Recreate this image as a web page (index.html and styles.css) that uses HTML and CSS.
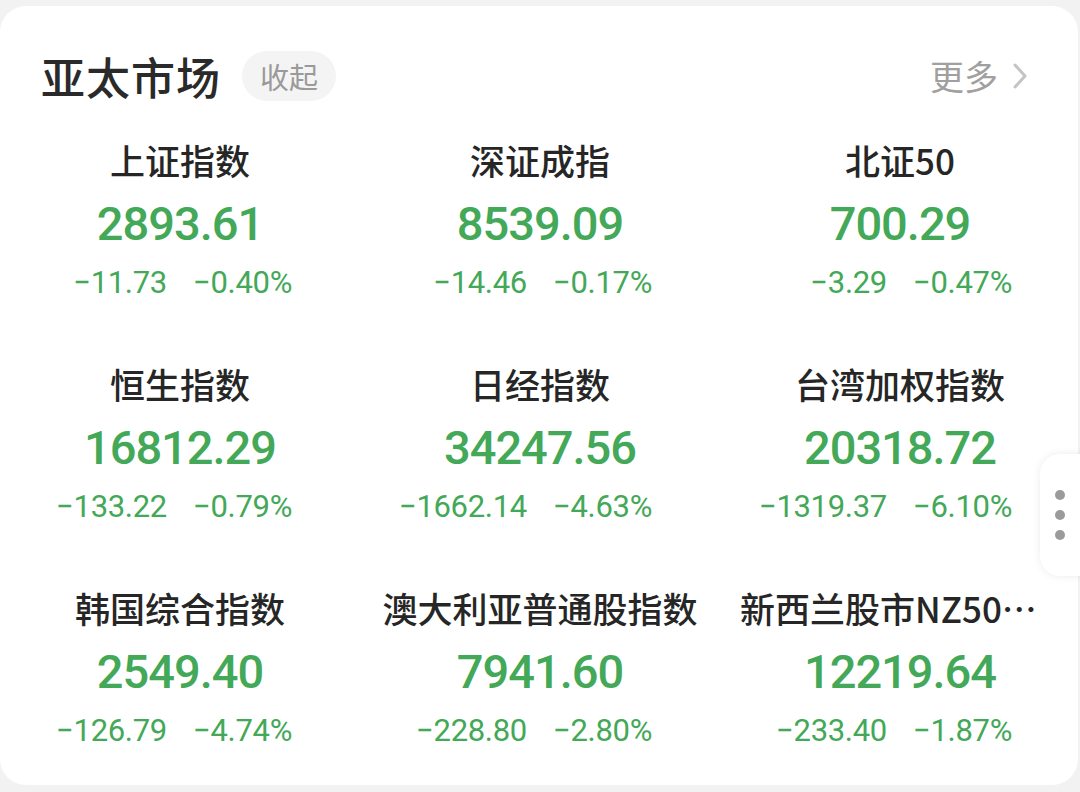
FILE: index.html
```html
<!DOCTYPE html>
<html lang="zh-CN">
<head>
<meta charset="utf-8">
<title>亚太市场</title>
<link rel="stylesheet" href="styles.css">
</head>
<body>
<div class="card">
  <div class="header">
    <div class="title-group">
      <h1 class="title">亚太市场</h1>
      <span class="pill">收起</span>
    </div>
    <div class="more">更多
      <svg class="chev" width="16" height="28" viewBox="0 0 16 28"><path d="M3 3 L13 14 L3 25" fill="none" stroke="#c4c4c4" stroke-width="3" stroke-linecap="round" stroke-linejoin="round"/></svg>
    </div>
  </div>
  <div class="grid">
    <div class="cell"><div class="name">上证指数</div><div class="value">2893.61</div><div class="change"><span class="abs">−11.73</span><span>−0.40%</span></div></div>
    <div class="cell"><div class="name">深证成指</div><div class="value">8539.09</div><div class="change"><span class="abs">−14.46</span><span>−0.17%</span></div></div>
    <div class="cell"><div class="name">北证50</div><div class="value">700.29</div><div class="change"><span class="abs">−3.29</span><span>−0.47%</span></div></div>
    <div class="cell"><div class="name">恒生指数</div><div class="value">16812.29</div><div class="change"><span class="abs">−133.22</span><span>−0.79%</span></div></div>
    <div class="cell"><div class="name">日经指数</div><div class="value">34247.56</div><div class="change"><span class="abs">−1662.14</span><span>−4.63%</span></div></div>
    <div class="cell"><div class="name">台湾加权指数</div><div class="value">20318.72</div><div class="change"><span class="abs">−1319.37</span><span>−6.10%</span></div></div>
    <div class="cell"><div class="name">韩国综合指数</div><div class="value">2549.40</div><div class="change"><span class="abs">−126.79</span><span>−4.74%</span></div></div>
    <div class="cell"><div class="name">澳大利亚普通股指数</div><div class="value">7941.60</div><div class="change"><span class="abs">−228.80</span><span>−2.80%</span></div></div>
    <div class="cell"><div class="name">新西兰股市NZ50指数</div><div class="value">12219.64</div><div class="change"><span class="abs">−233.40</span><span>−1.87%</span></div></div>
  </div>
</div>
<div class="handle"><i></i><i></i><i></i></div>
</body>
</html>
```
FILE: styles.css
```css
html, body {
  margin: 0;
  padding: 0;
}
body {
  background: #f2f2f2;
  width: 1080px;
  height: 792px;
  overflow: hidden;
  font-family: "Noto Sans CJK SC", "Noto Sans", sans-serif;
}
.card {
  margin-top: 6px;
  width: 1078px;
  height: 779px;
  background: #fff;
  border-radius: 26px;
  box-sizing: border-box;
  padding: 40px 0 0 0;
}
.header {
  display: flex;
  align-items: center;
  justify-content: space-between;
  height: 60px;
  padding: 0 50px 0 41px;
}
.title-group {
  display: flex;
  align-items: center;
  gap: 21px;
}
.title {
  margin: 0;
  font-size: 44px;
  font-weight: 500;
  color: #2a2a2a;
  letter-spacing: 1px;
  line-height: 60px;
}
.pill {
  background: #f4f4f4;
  color: #9a9a9a;
  font-size: 29px;
  line-height: 50px;
  height: 50px;
  padding: 0 18px;
  border-radius: 25px;
}
.more {
  display: flex;
  align-items: center;
  gap: 14px;
  color: #a0a0a0;
  font-size: 34px;
  line-height: 44px;
}
.chev {
  display: block;
}
.grid {
  display: grid;
  grid-template-columns: repeat(3, 360px);
  row-gap: 58px;
  margin-top: 29px;
}
.cell {
  display: flex;
  flex-direction: column;
  align-items: center;
  min-width: 0;
}
.name {
  font-size: 35px;
  font-weight: 500;
  color: #262626;
  line-height: 50px;
  height: 50px;
  max-width: 320px;
  white-space: nowrap;
  overflow: hidden;
  text-overflow: ellipsis;
}
.value {
  margin-top: 11px;
  font-family: Roboto, "Noto Sans", sans-serif;
  font-size: 47px;
  letter-spacing: -1px;
  font-weight: 500;
  color: #43a857;
  line-height: 56px;
}
.change {
  margin-top: 13px;
  align-self: stretch;
  display: grid;
  grid-template-columns: 1fr 1fr;
  column-gap: 26px;
  font-family: Roboto, "Noto Sans", sans-serif;
  font-size: 31px;
  letter-spacing: -0.3px;
  color: #43a857;
  line-height: 36px;
  white-space: nowrap;
}
.change .abs {
  text-align: right;
}
.handle {
  position: absolute;
  left: 1040px;
  top: 454px;
  width: 60px;
  height: 122px;
  background: #fff;
  border-radius: 20px 0 0 20px;
  box-shadow: 0 0 8px rgba(0,0,0,0.08);
  display: flex;
  flex-direction: column;
  align-items: flex-start;
  justify-content: center;
  gap: 10px;
  padding-left: 15px;
  box-sizing: border-box;
}
.handle i {
  display: block;
  width: 10px;
  height: 10px;
  border-radius: 50%;
  background: #9b9b9b;
}
```
